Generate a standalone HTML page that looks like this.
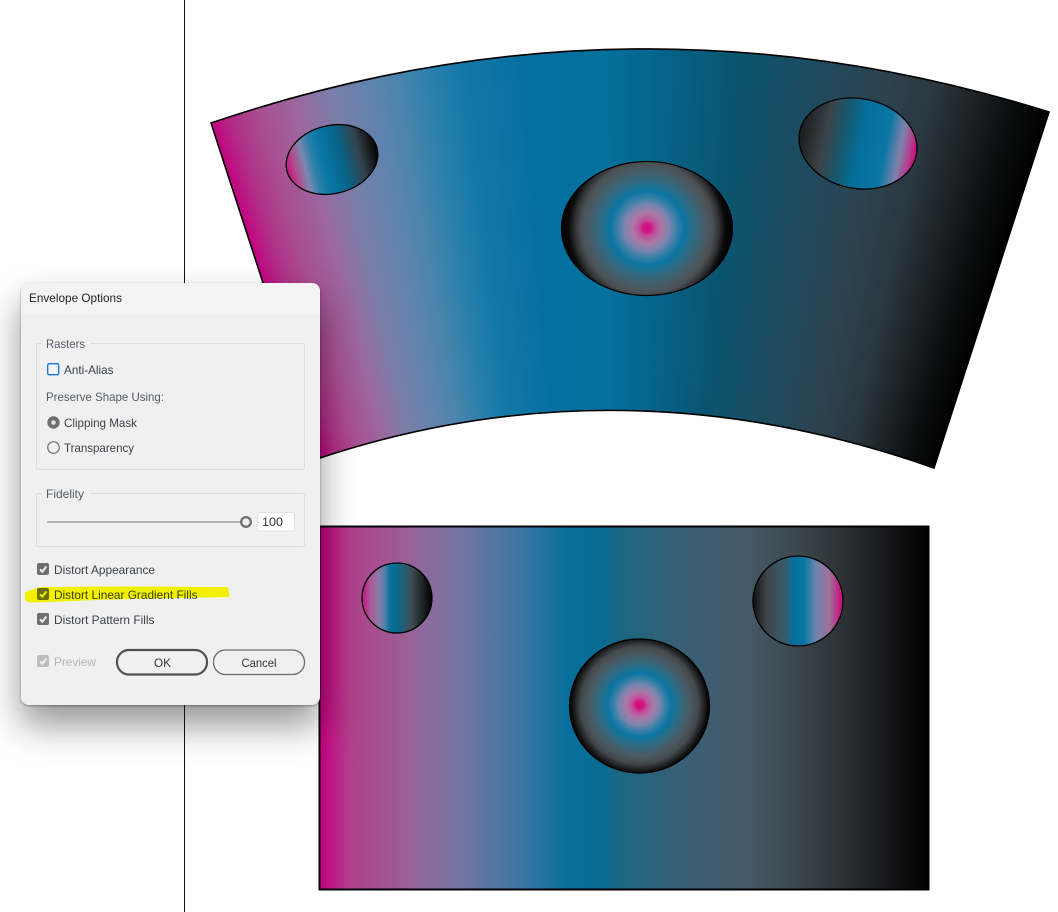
<!DOCTYPE html>
<html>
<head>
<meta charset="utf-8">
<style>
html,body{margin:0;padding:0;background:#fff;}
#p{position:relative;width:1058px;height:912px;overflow:hidden;background:#fff;font-family:"Liberation Sans",sans-serif;}
.a{position:absolute;}
#line{left:184px;top:0;width:1px;height:912px;background:#111;}
#fan{left:0;top:0;width:1058px;height:912px;
background:conic-gradient(from -18.1deg at 630px 1409px,#c4007f 0deg,#b03088 1deg,#a84f90 2.2deg,#9c669f 3.7deg,#7a7ea9 5.3deg,#5f83ad 7deg,#4a85ad 8.2deg,#2a80ab 9.6deg,#1478a8 11deg,#036f9f 14deg,#04709c 17deg,#05638a 19.5deg,#0a5570 22.5deg,#1c4c62 25.5deg,#2d424f 29deg,#2a3840 31deg,#1c2226 32.8deg,#0a0c0d 34.6deg,#000 36.2deg,#000 360deg);
clip-path:path("M211 123 Q630 -19.5 1049 112 L934 468 Q622 358 320 458 Z");}
#rect{left:320px;top:527px;width:608px;height:362px;
background:linear-gradient(90deg,#c4007f 0%,#b0408a 5%,#9a5f95 14%,#8a6c9e 18%,#6a75a2 25%,#3b76a3 33%,#066f9c 41%,#0a6c92 46%,#21657f 51%,#3a5f75 60%,#455a68 70%,#3c484f 78%,#2a2e32 87%,#141516 94%,#000 100%);}
svg{position:absolute;left:0;top:0;}
#shadow{left:21px;top:283px;width:299px;height:422px;border-radius:8px;box-shadow:0 20px 36px rgba(0,0,0,.42),0 1px 2px rgba(0,0,0,.35);}
#dlg{left:21px;top:283px;width:299px;height:422px;border-radius:8px;background:#f0f0f0;overflow:hidden;}
#ttl{left:0;top:0;width:100%;height:31px;background:#f3f3f3;}
text{font-family:"Liberation Sans",sans-serif;font-size:12px;fill:#3a3f47;}
</style>
</head>
<body>
<div id="p">
<div class="a" id="fan"></div>
<div class="a" id="rect"></div>
<svg width="1058" height="912" viewBox="0 0 1058 912">
<defs>
<radialGradient id="r1" gradientUnits="userSpaceOnUse" cx="647" cy="228" r="85">
<stop offset="0" stop-color="#d6007f"/><stop offset=".05" stop-color="#cf1a85"/><stop offset=".1" stop-color="#c0509a"/><stop offset=".18" stop-color="#a87aa5"/><stop offset=".27" stop-color="#7a85ae"/><stop offset=".35" stop-color="#3a80a8"/><stop offset=".44" stop-color="#0a75a2"/><stop offset=".55" stop-color="#2e6a82"/><stop offset=".7" stop-color="#4a5a63"/><stop offset=".78" stop-color="#4a4f52"/><stop offset=".85" stop-color="#2f3133"/><stop offset=".92" stop-color="#0a0a0a"/><stop offset="1" stop-color="#000"/>
</radialGradient>
<radialGradient id="r2" gradientUnits="userSpaceOnUse" cx="639.5" cy="705" r="70">
<stop offset="0" stop-color="#d6007f"/><stop offset=".06" stop-color="#cf1a85"/><stop offset=".11" stop-color="#c0509a"/><stop offset=".2" stop-color="#a87aa5"/><stop offset=".29" stop-color="#7a85ae"/><stop offset=".37" stop-color="#3a80a8"/><stop offset=".46" stop-color="#0a75a2"/><stop offset=".58" stop-color="#2e6a82"/><stop offset=".72" stop-color="#4a5a63"/><stop offset=".84" stop-color="#44494c"/><stop offset=".93" stop-color="#1c1d1e"/><stop offset="1" stop-color="#000"/>
</radialGradient>
<linearGradient id="l1" x1="0" x2="1" y1="0" y2="0">
<stop offset="0" stop-color="#c8107f"/><stop offset=".1" stop-color="#b0508f"/><stop offset=".2" stop-color="#7a88b0"/><stop offset=".3" stop-color="#2a80aa"/><stop offset=".4" stop-color="#0a78a6"/><stop offset=".6" stop-color="#07648a"/><stop offset=".8" stop-color="#33434b"/><stop offset=".95" stop-color="#111"/><stop offset="1" stop-color="#000"/>
</linearGradient>
<linearGradient id="l2" x1="0" x2="1" y1="0" y2="0">
<stop offset="0" stop-color="#1a1a1a"/><stop offset=".22" stop-color="#3a4449"/><stop offset=".39" stop-color="#145a74"/><stop offset=".52" stop-color="#046f9c"/><stop offset=".73" stop-color="#0a76a4"/><stop offset=".86" stop-color="#7f82ab"/><stop offset=".94" stop-color="#b04090"/><stop offset="1" stop-color="#d0007f"/>
</linearGradient>
<linearGradient id="l3" x1="0" x2="1" y1="0" y2="0">
<stop offset="0" stop-color="#c8107f"/><stop offset=".12" stop-color="#a85a95"/><stop offset=".25" stop-color="#8a7aa8"/><stop offset=".33" stop-color="#4a80a8"/><stop offset=".4" stop-color="#06709c"/><stop offset=".5" stop-color="#0a6a8e"/><stop offset=".7" stop-color="#3e4e56"/><stop offset=".95" stop-color="#0d0d0d"/><stop offset="1" stop-color="#000"/>
</linearGradient>
<linearGradient id="l4" x1="0" x2="1" y1="0" y2="0">
<stop offset="0" stop-color="#111"/><stop offset=".15" stop-color="#3c4549"/><stop offset=".35" stop-color="#3a5a6a"/><stop offset=".45" stop-color="#056f9a"/><stop offset=".57" stop-color="#0a76a4"/><stop offset=".7" stop-color="#6f85ad"/><stop offset=".85" stop-color="#a0709a"/><stop offset="1" stop-color="#d0007f"/>
</linearGradient>
</defs>
<path d="M211 123 Q630 -19.5 1049 112 L934 468 Q622 358 320 458 Z" fill="none" stroke="#000" stroke-width="1.6"/>
<ellipse cx="332" cy="159.5" rx="46.5" ry="34" transform="rotate(-14 332 159.5)" fill="url(#l1)" stroke="#000" stroke-width="1.3"/>
<ellipse cx="858" cy="143.5" rx="59.5" ry="45" transform="rotate(11 858 143.5)" fill="url(#l2)" stroke="#000" stroke-width="1.3"/>
<ellipse cx="647" cy="228.5" rx="85.5" ry="67" fill="url(#r1)" stroke="#000" stroke-width="1.3"/>
<rect x="319.5" y="526.5" width="609" height="363" fill="none" stroke="#000" stroke-width="2"/>
<ellipse cx="397" cy="598" rx="35" ry="35" fill="url(#l3)" stroke="#000" stroke-width="1.3"/>
<ellipse cx="798" cy="601" rx="45" ry="45" fill="url(#l4)" stroke="#000" stroke-width="1.3"/>
<ellipse cx="639.5" cy="706" rx="70" ry="67" fill="url(#r2)" stroke="#000" stroke-width="1.3"/>
</svg>
<div class="a" id="shadow"></div>
<div class="a" id="line"></div>
<div class="a" id="dlg"><div class="a" id="ttl"></div></div>
<svg width="1058" height="912" viewBox="0 0 1058 912">
<rect x="36.5" y="343.5" width="268" height="126" rx="2" fill="none" stroke="#dcdcdc"/>
<rect x="42" y="338" width="48" height="12" fill="#f0f0f0"/>
<rect x="36.5" y="493.5" width="268" height="53" rx="2" fill="none" stroke="#dcdcdc"/>
<rect x="42" y="488" width="48" height="12" fill="#f0f0f0"/>
<text x="29" y="302" textLength="93" lengthAdjust="spacingAndGlyphs" style="fill:#222">Envelope Options</text>
<text x="46" y="348" textLength="39" lengthAdjust="spacingAndGlyphs" style="fill:#555c66">Rasters</text>
<rect x="47.7" y="363.7" width="11" height="11" rx="1.5" fill="#f4f4f4" stroke="#1473e6" stroke-width="1.3"/>
<text x="64" y="374" textLength="49.5" lengthAdjust="spacingAndGlyphs">Anti-Alias</text>
<text x="46" y="401" textLength="118" lengthAdjust="spacingAndGlyphs" style="fill:#555c66">Preserve Shape Using:</text>
<circle cx="53.5" cy="422.5" r="6.2" fill="#6f6f6f"/>
<circle cx="53.5" cy="422.5" r="2.3" fill="#dedede"/>
<text x="64" y="427" textLength="73" lengthAdjust="spacingAndGlyphs">Clipping Mask</text>
<circle cx="53.5" cy="447.5" r="5.8" fill="#f0f0f0" stroke="#707070" stroke-width="1.2"/>
<text x="64" y="452" textLength="70" lengthAdjust="spacingAndGlyphs">Transparency</text>
<text x="46" y="498" textLength="38" lengthAdjust="spacingAndGlyphs" style="fill:#555c66">Fidelity</text>
<rect x="47" y="521" width="193" height="2" fill="#b4b4b4"/>
<circle cx="246" cy="522" r="4.8" fill="#f0f0f0" stroke="#707070" stroke-width="2.3"/>
<rect x="257.5" y="512.5" width="37" height="18.5" rx="1.5" fill="#fff" stroke="#e2e2e2"/>
<text x="262" y="526" textLength="21" lengthAdjust="spacingAndGlyphs" style="fill:#333">100</text>
<rect x="37" y="563" width="12" height="12" rx="2" fill="#6e6e6e"/>
<path d="M40 569.3 L42.3 571.7 L46.3 566.5" fill="none" stroke="#eee" stroke-width="2"/>
<text x="54" y="574" textLength="101" lengthAdjust="spacingAndGlyphs">Distort Appearance</text>
<rect x="37" y="588" width="12" height="12" rx="2" fill="#6e6e6e"/>
<path d="M40 594.3 L42.3 596.7 L46.3 591.5" fill="none" stroke="#eee" stroke-width="2"/>
<text x="54" y="599" textLength="143.5" lengthAdjust="spacingAndGlyphs">Distort Linear Gradient Fills</text>
<rect x="37" y="613" width="12" height="12" rx="2" fill="#6e6e6e"/>
<path d="M40 619.3 L42.3 621.7 L46.3 616.5" fill="none" stroke="#eee" stroke-width="2"/>
<text x="54" y="624" textLength="100.5" lengthAdjust="spacingAndGlyphs">Distort Pattern Fills</text>
<rect x="37" y="655" width="12" height="12" rx="2" fill="#bdbdbd"/>
<path d="M40 661.3 L42.3 663.7 L46.3 658.5" fill="none" stroke="#eee" stroke-width="2"/>
<text x="54" y="666" textLength="42" lengthAdjust="spacingAndGlyphs" style="fill:#b4b6b8">Preview</text>
<rect x="117" y="650" width="90" height="24.5" rx="12" fill="#f0f0f0" stroke="#505050" stroke-width="2.2"/>
<text x="154" y="667" textLength="17" lengthAdjust="spacingAndGlyphs" style="fill:#333">OK</text>
<rect x="213.5" y="650" width="91" height="24.5" rx="12" fill="#f0f0f0" stroke="#6a6a6a" stroke-width="1.3"/>
<text x="241.5" y="667" textLength="35" lengthAdjust="spacingAndGlyphs" style="fill:#333">Cancel</text>
<path d="M25 593 Q30 589 43 587 L120 586.5 L228 587 L229.5 597 L110 599.5 L35 602.5 Q27 603 25 600 Z" fill="#ffff00" style="mix-blend-mode:multiply"/>
</svg>
</div>
</body>
</html>
